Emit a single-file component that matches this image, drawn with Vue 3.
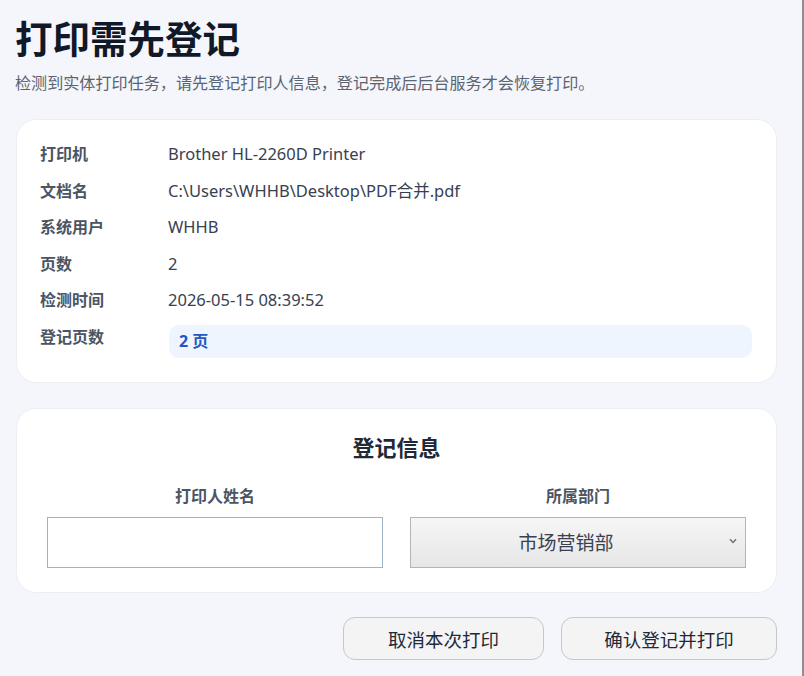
<script setup>
import { ref } from 'vue'

const details = [
  { label: '打印机', value: 'Brother HL-2260D Printer' },
  { label: '文档名', value: 'C:\\Users\\WHHB\\Desktop\\PDF合并.pdf' },
  { label: '系统用户', value: 'WHHB' },
  { label: '页数', value: '2' },
  { label: '检测时间', value: '2026-05-15 08:39:52' }
]

const printerName = ref('')
const department = ref('市场营销部')
</script>

<template>
  <main class="page">
    <header class="head">
      <h1>打印需先登记</h1>
      <p class="sub">检测到实体打印任务，请先登记打印人信息，登记完成后后台服务才会恢复打印。</p>
    </header>

    <section class="card info">
      <div v-for="item in details" :key="item.label" class="row">
        <span class="label">{{ item.label }}</span>
        <span class="value">{{ item.value }}</span>
      </div>
      <div class="row row-pages">
        <span class="label">登记页数</span>
        <span class="chip">2 页</span>
      </div>
    </section>

    <section class="card form">
      <h2>登记信息</h2>
      <div class="fields">
        <label class="field">
          <span class="field-label">打印人姓名</span>
          <input v-model="printerName" class="name-input" type="text" />
        </label>
        <label class="field">
          <span class="field-label">所属部门</span>
          <span class="select-wrap">
            <select v-model="department" class="dept-select">
              <option>市场营销部</option>
            </select>
            <svg class="chevron" width="8" height="6" viewBox="0 0 8 6">
              <path d="M1 1.2 L4 4.4 L7 1.2" fill="none" stroke="#6b6f76" stroke-width="1.4" />
            </svg>
          </span>
        </label>
      </div>
    </section>

    <footer class="actions">
      <button class="btn btn-cancel">取消本次打印</button>
      <button class="btn btn-confirm">确认登记并打印</button>
    </footer>
  </main>
</template>

<style>
body {
  margin: 0;
  background: #f4f6fb;
}
</style>

<style scoped>
* {
  box-sizing: border-box;
}

.page {
  width: 804px;
  height: 676px;
  padding: 14px 25px 0 16px;
  overflow: hidden;
  background: #f4f6fb;
  border-right: 2px solid #8e8e8e;
  color: #1f2937;
  font-family: 'Noto Sans', 'Noto Sans CJK SC', sans-serif;
}

h1 {
  margin: 0 0 0 -1px;
  font-size: 37.5px;
  line-height: 50px;
  font-weight: 700;
  color: #111827;
}

.sub {
  margin: 8px 0 0 -1px;
  font-size: 16.1px;
  line-height: 22px;
  color: #5b6472;
}

.card {
  background: #fff;
  border: 1px solid #eceef3;
  border-radius: 20px;
}

.info {
  margin-top: 25px;
  height: 264px;
  padding: 16px 24px 0 23px;
}

.row {
  display: grid;
  grid-template-columns: 128px 1fr;
  height: 36.5px;
  align-items: center;
  font-size: 16px;
}

.label {
  line-height: 24px;
  font-weight: 700;
  color: #4b5563;
}

.value {
  line-height: 24px;
  font-size: 16.5px;
  color: #374151;
}

.row-pages {
  height: 33px;
  margin-top: 6px;
  align-items: start;
}

.chip {
  height: 33px;
  margin-left: 1px;
  line-height: 33px;
  padding-left: 10px;
  background: #eef5ff;
  border-radius: 10px;
  font-weight: 700;
  color: #2457c5;
}

.form {
  margin-top: 25px;
  height: 185px;
  padding: 23px 30px 0;
}

h2 {
  margin: 0;
  text-align: center;
  font-size: 22px;
  line-height: 30px;
  font-weight: 700;
  color: #1f2937;
}

.fields {
  display: grid;
  grid-template-columns: 336px 336px;
  gap: 27px;
  margin-top: 22px;
}

.field {
  display: block;
  text-align: center;
}

.field-label {
  display: block;
  height: 33px;
  line-height: 24px;
  font-size: 16px;
  font-weight: 700;
  color: #4b5563;
}

.name-input {
  display: block;
  width: 100%;
  height: 51px;
  border: 1px solid #9fb3c6;
  border-radius: 0;
  background: #fff;
  outline: none;
}

.select-wrap {
  position: relative;
  display: block;
}

.dept-select {
  display: block;
  width: 100%;
  height: 51px;
  padding: 0 24px 0 0;
  appearance: none;
  border: 1px solid #b4b4b4;
  border-radius: 0;
  background: linear-gradient(#f6f6f6, #e6e6e6);
  font: inherit;
  font-size: 19px;
  color: #374151;
  text-align: center;
  text-align-last: center;
  outline: none;
}

.chevron {
  position: absolute;
  right: 9px;
  top: 21px;
}

.actions {
  display: flex;
  justify-content: flex-end;
  gap: 17px;
  margin-top: 24px;
}

.btn {
  height: 43px;
  border: 1px solid #c4c7cd;
  border-radius: 12px;
  background: #f4f4f5;
  font: inherit;
  font-size: 18.5px;
  color: #1f2937;
}

.btn-cancel {
  width: 201px;
}

.btn-confirm {
  width: 216px;
}
</style>
